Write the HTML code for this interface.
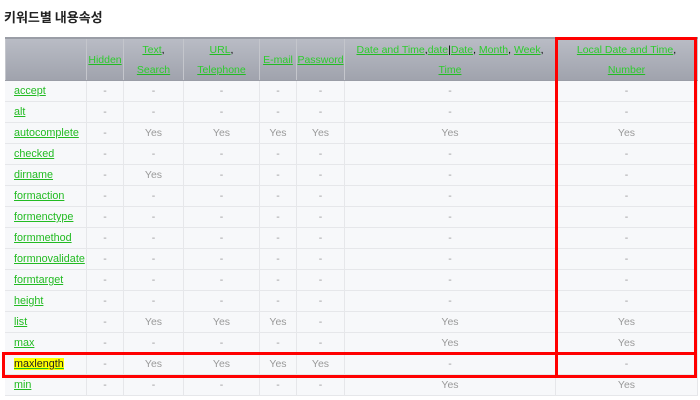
<!DOCTYPE html>
<html><head><meta charset="utf-8"><style>
body{margin:0;background:#fff;width:700px;height:400px;overflow:hidden;font-family:"Liberation Sans","Noto Sans CJK KR",sans-serif;position:relative}
h1{position:absolute;left:4px;top:7px;margin:0;font-size:13px;font-weight:bold;color:#222;font-family:"Noto Sans CJK KR",sans-serif}
table{position:absolute;left:5px;top:37px;border-collapse:collapse;table-layout:fixed;width:692px;font-size:10.5px}
th{height:41px;background:linear-gradient(#b9bcc5,#a0a3ad);border:1px solid #c4c6cc;border-top:2px solid #9a9da6;border-bottom:1px solid #9a9da6;font-weight:normal;line-height:20px;padding:0;text-align:center}
td{height:20px;border:1px solid #e6e7ea;background:#f7f8fa;color:#999;text-align:center;padding:0;font-size:10.5px}
td:first-child{text-align:left;padding-left:8px;font-size:10.8px;border-left-color:#f7f8fa}
a{color:#22bb22;text-decoration:underline;text-decoration-color:#22bb22}
th a{color:#2dcc2d}
.hl{background:#ffff00;color:#222}
.box{position:absolute;border:3px solid #ff0000;box-sizing:border-box}
</style></head><body>
<h1>키워드별 내용속성</h1>
<table>
<colgroup><col style="width:81px"><col style="width:37px"><col style="width:60px"><col style="width:76px"><col style="width:37px"><col style="width:48px"><col style="width:211px"><col style="width:142px"></colgroup>
<tr><th></th><th><a>Hidden</a></th><th><a>Text</a>,<br><a>Search</a></th><th><a>URL</a>,<br><a>Telephone</a></th><th><a>E-mail</a></th><th><a>Password</a></th><th><a>Date and Time</a>,<a>date</a>|<a>Date</a>, <a>Month</a>, <a>Week</a>,<br><a>Time</a></th><th><a>Local Date and Time</a>,<br><a>Number</a></th></tr>
<tr><td><a>accept</a></td><td>-</td><td>-</td><td>-</td><td>-</td><td>-</td><td>-</td><td>-</td></tr>
<tr><td><a>alt</a></td><td>-</td><td>-</td><td>-</td><td>-</td><td>-</td><td>-</td><td>-</td></tr>
<tr><td><a>autocomplete</a></td><td>-</td><td>Yes</td><td>Yes</td><td>Yes</td><td>Yes</td><td>Yes</td><td>Yes</td></tr>
<tr><td><a>checked</a></td><td>-</td><td>-</td><td>-</td><td>-</td><td>-</td><td>-</td><td>-</td></tr>
<tr><td><a>dirname</a></td><td>-</td><td>Yes</td><td>-</td><td>-</td><td>-</td><td>-</td><td>-</td></tr>
<tr><td><a>formaction</a></td><td>-</td><td>-</td><td>-</td><td>-</td><td>-</td><td>-</td><td>-</td></tr>
<tr><td><a>formenctype</a></td><td>-</td><td>-</td><td>-</td><td>-</td><td>-</td><td>-</td><td>-</td></tr>
<tr><td><a>formmethod</a></td><td>-</td><td>-</td><td>-</td><td>-</td><td>-</td><td>-</td><td>-</td></tr>
<tr><td><a>formnovalidate</a></td><td>-</td><td>-</td><td>-</td><td>-</td><td>-</td><td>-</td><td>-</td></tr>
<tr><td><a>formtarget</a></td><td>-</td><td>-</td><td>-</td><td>-</td><td>-</td><td>-</td><td>-</td></tr>
<tr><td><a>height</a></td><td>-</td><td>-</td><td>-</td><td>-</td><td>-</td><td>-</td><td>-</td></tr>
<tr><td><a>list</a></td><td>-</td><td>Yes</td><td>Yes</td><td>Yes</td><td>-</td><td>Yes</td><td>Yes</td></tr>
<tr><td><a>max</a></td><td>-</td><td>-</td><td>-</td><td>-</td><td>-</td><td>Yes</td><td>Yes</td></tr>
<tr><td><a class="hl">maxlength</a></td><td>-</td><td>Yes</td><td>Yes</td><td>Yes</td><td>Yes</td><td>-</td><td>-</td></tr>
<tr><td><a>min</a></td><td>-</td><td>-</td><td>-</td><td>-</td><td>-</td><td>Yes</td><td>Yes</td></tr>
</table>
<div class="box" style="left:555px;top:37px;width:142px;height:341px"></div>
<div class="box" style="left:2px;top:352px;width:695px;height:26px"></div>
</body></html>
